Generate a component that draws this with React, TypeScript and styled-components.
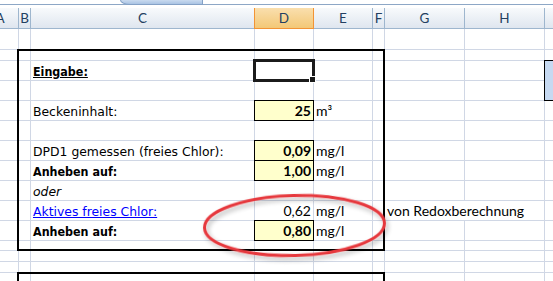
import React from "react";
import styled, { createGlobalStyle, css } from "styled-components";

const GlobalStyle = createGlobalStyle`
  html, body { margin: 0; padding: 0; background: #fff; }
  body { overflow: hidden; }
`;

const COLS = [37, 12, 224, 59, 59, 12, 80, 80, 110];
const ROW_HEIGHTS = [21, 21, 11, 20, 20, 20, 20, 20, 20, 20, 20, 20, 10, 11, 11, 20];
const LETTERS = ["A", "B", "C", "D", "E", "F", "G", "H", "I"];
const ACTIVE_COL = 4;

const Viewport = styled.div`
  position: relative;
  width: 553px;
  height: 281px;
  overflow: hidden;
  background: #fff;
`;

const TopStrip = styled.div`
  height: 8px;
  display: flex;
  align-items: flex-start;
  background: linear-gradient(
    to bottom,
    #fff 0,
    #fff 4px,
    #8da7c6 4px,
    #8da7c6 5px,
    #fff 5px
  );
`;

const ScrollTab = styled.div`
  margin-left: 120px;
  width: 83px;
  height: 5px;
  box-sizing: border-box;
  background: linear-gradient(to bottom, #c9daef, #a9c3e3);
  border: 1px solid #84a1c6;
  border-top: none;
  border-bottom-left-radius: 10px 5px;
`;

const Sheet = styled.div`
  display: grid;
  grid-template-columns: ${COLS.map((c) => `${c}px`).join(" ")};
  grid-template-rows: ${ROW_HEIGHTS.map((h) => `${h}px`).join(" ")};
  margin-left: -18px;
  width: max-content;
`;

const HeadCell = styled.div<{ $c: number; $active?: boolean }>`
  grid-row: 1;
  grid-column: ${(p) => p.$c};
  box-sizing: border-box;
  border-right: 1px solid #9eb6ce;
  border-bottom: 1px solid #9eb6ce;
  background: linear-gradient(to bottom, #f8fafc, #dfe6ef);
  display: flex;
  align-items: center;
  justify-content: center;
  font-family: Lato, "Open Sans", sans-serif;
  font-size: 13.5px;
  color: #233f61;
  ${(p) =>
    p.$active &&
    css`
      margin-left: -1px;
      border: 1px solid #f29436;
      border-top: none;
      background: linear-gradient(to bottom, #fadfae, #f3c877);
      z-index: 1;
    `}
`;

const Cell = styled.div<{ $r: number; $c: number; $span?: number; $right?: boolean }>`
  grid-row: ${(p) => p.$r};
  grid-column: ${(p) => p.$c} / span ${(p) => p.$span ?? 1};
  box-sizing: border-box;
  border-right: 1px solid #d0d7e5;
  border-bottom: 1px solid #d0d7e5;
  background: #fff;
  display: flex;
  align-items: flex-end;
  justify-content: ${(p) => (p.$right ? "flex-end" : "flex-start")};
  padding: 0 2px 1px;
  white-space: nowrap;
  min-width: 0;
`;

const InputCell = styled(Cell)`
  margin: -1px 0 0 -1px;
  border: 1px solid #000;
  background: #ffffcc;
  z-index: 1;
`;

type Tone = "plain" | "heading" | "strong" | "note" | "link";

const Label = styled.span<{ $tone: Tone }>`
  font-family: "DejaVu Sans", Verdana, sans-serif;
  font-size: 12.4px;
  line-height: 14px;
  color: #000;
  ${(p) =>
    (p.$tone === "heading" || p.$tone === "strong") &&
    css`
      font-family: "DejaVu Sans Condensed", "DejaVu Sans", sans-serif;
      font-stretch: condensed;
      font-weight: bold;
    `}
  ${(p) => p.$tone === "heading" && css`text-decoration: underline;`}
  ${(p) => p.$tone === "note" && css`font-style: italic;`}
  ${(p) =>
    p.$tone === "link" &&
    css`
      color: #0000ff;
      text-decoration: underline;
    `}
`;

const Value = styled.span<{ $bold?: boolean }>`
  font-family: Lato, "Open Sans", sans-serif;
  font-size: 14px;
  line-height: 16px;
  color: #000;
  font-weight: ${(p) => (p.$bold ? 700 : 400)};
`;

const Frame = styled.div<{ $rows: string }>`
  grid-row: ${(p) => p.$rows};
  grid-column: 2 / 7;
  margin: -1px 0 0 -2px;
  border: 2px solid #000;
  z-index: 2;
  pointer-events: none;
`;

const Selection = styled.div`
  grid-row: 4;
  grid-column: 4;
  margin: -2px -1px -1px -2px;
  border: 3px solid #1b1b1b;
  position: relative;
  z-index: 3;
  &::after {
    content: "";
    position: absolute;
    right: -4px;
    bottom: -4px;
    width: 5px;
    height: 5px;
    background: #1b1b1b;
    border: 1px solid #fff;
  }
`;

const ShapeButton = styled.div`
  grid-row: 4 / span 2;
  grid-column: 9;
  margin: -1px 0 0 -1px;
  border: 1px solid #000;
  background: #c6d9f1;
  z-index: 2;
`;

const Overlay = styled.svg`
  position: absolute;
  left: 0;
  top: 0;
  width: 553px;
  height: 281px;
  pointer-events: none;
  z-index: 5;
`;

interface RowData {
  r: number;
  label?: { text: string; tone: Tone };
  value?: { text: string; bold?: boolean; input?: boolean };
  unit?: string;
  note?: string;
}

const DATA: RowData[] = [
  { r: 4, label: { text: "Eingabe:", tone: "heading" } },
  {
    r: 6,
    label: { text: "Beckeninhalt:", tone: "plain" },
    value: { text: "25", bold: true, input: true },
    unit: "m³",
  },
  {
    r: 8,
    label: { text: "DPD1 gemessen (freies Chlor):", tone: "plain" },
    value: { text: "0,09", bold: true, input: true },
    unit: "mg/l",
  },
  {
    r: 9,
    label: { text: "Anheben auf:", tone: "strong" },
    value: { text: "1,00", bold: true, input: true },
    unit: "mg/l",
  },
  { r: 10, label: { text: "oder", tone: "note" } },
  {
    r: 11,
    label: { text: "Aktives freies Chlor:", tone: "link" },
    value: { text: "0,62" },
    unit: "mg/l",
    note: "von Redoxberechnung",
  },
  {
    r: 12,
    label: { text: "Anheben auf:", tone: "strong" },
    value: { text: "0,80", bold: true, input: true },
    unit: "mg/l",
  },
];

function renderCells() {
  const byRow: Record<number, RowData> = {};
  DATA.forEach((d) => (byRow[d.r] = d));
  const out: React.ReactNode[] = [];
  for (let r = 2; r <= ROW_HEIGHTS.length; r++) {
    const d = byRow[r];
    for (let c = 1; c <= COLS.length; c++) {
      const key = `${r}-${c}`;
      if (d?.note && c === 8) continue;
      if (c === 3 && d?.label) {
        out.push(
          <Cell key={key} $r={r} $c={c}>
            <Label $tone={d.label.tone}>{d.label.text}</Label>
          </Cell>
        );
      } else if (c === 4 && d?.value) {
        const C = d.value.input ? InputCell : Cell;
        out.push(
          <C key={key} $r={r} $c={c} $right>
            <Value $bold={d.value.bold}>{d.value.text}</Value>
          </C>
        );
      } else if (c === 5 && d?.unit) {
        out.push(
          <Cell key={key} $r={r} $c={c}>
            <Value>{d.unit}</Value>
          </Cell>
        );
      } else if (c === 7 && d?.note) {
        out.push(
          <Cell key={key} $r={r} $c={c} $span={2}>
            <Value>{d.note}</Value>
          </Cell>
        );
      } else {
        out.push(<Cell key={key} $r={r} $c={c} />);
      }
    }
  }
  return out;
}

export default function App() {
  return (
    <>
      <GlobalStyle />
      <Viewport>
        <TopStrip>
          <ScrollTab />
        </TopStrip>
        <Sheet>
          {LETTERS.map((l, i) => (
            <HeadCell key={l} $c={i + 1} $active={i + 1 === ACTIVE_COL}>
              {l}
            </HeadCell>
          ))}
          {renderCells()}
          <Frame $rows="3 / 14" />
          <Frame $rows="16 / 17" />
          <Selection />
          <ShapeButton />
        </Sheet>
        <Overlay viewBox="0 0 553 281">
          <defs>
            <filter id="ringShadow" x="-20%" y="-50%" width="140%" height="200%">
              <feGaussianBlur in="SourceAlpha" stdDeviation="2.5" result="blur" />
              <feOffset in="blur" dx="2" dy="3" result="off" />
              <feComponentTransfer in="off" result="soft">
                <feFuncA type="linear" slope="0.3" />
              </feComponentTransfer>
              <feMerge>
                <feMergeNode in="soft" />
                <feMergeNode in="SourceGraphic" />
              </feMerge>
            </filter>
          </defs>
          <ellipse
            cx="294.5"
            cy="225.5"
            rx="90"
            ry="30"
            fill="none"
            stroke="#e6393d"
            strokeWidth="3"
            transform="rotate(-1.5 294.5 225.5)"
            filter="url(#ringShadow)"
          />
        </Overlay>
      </Viewport>
    </>
  );
}
